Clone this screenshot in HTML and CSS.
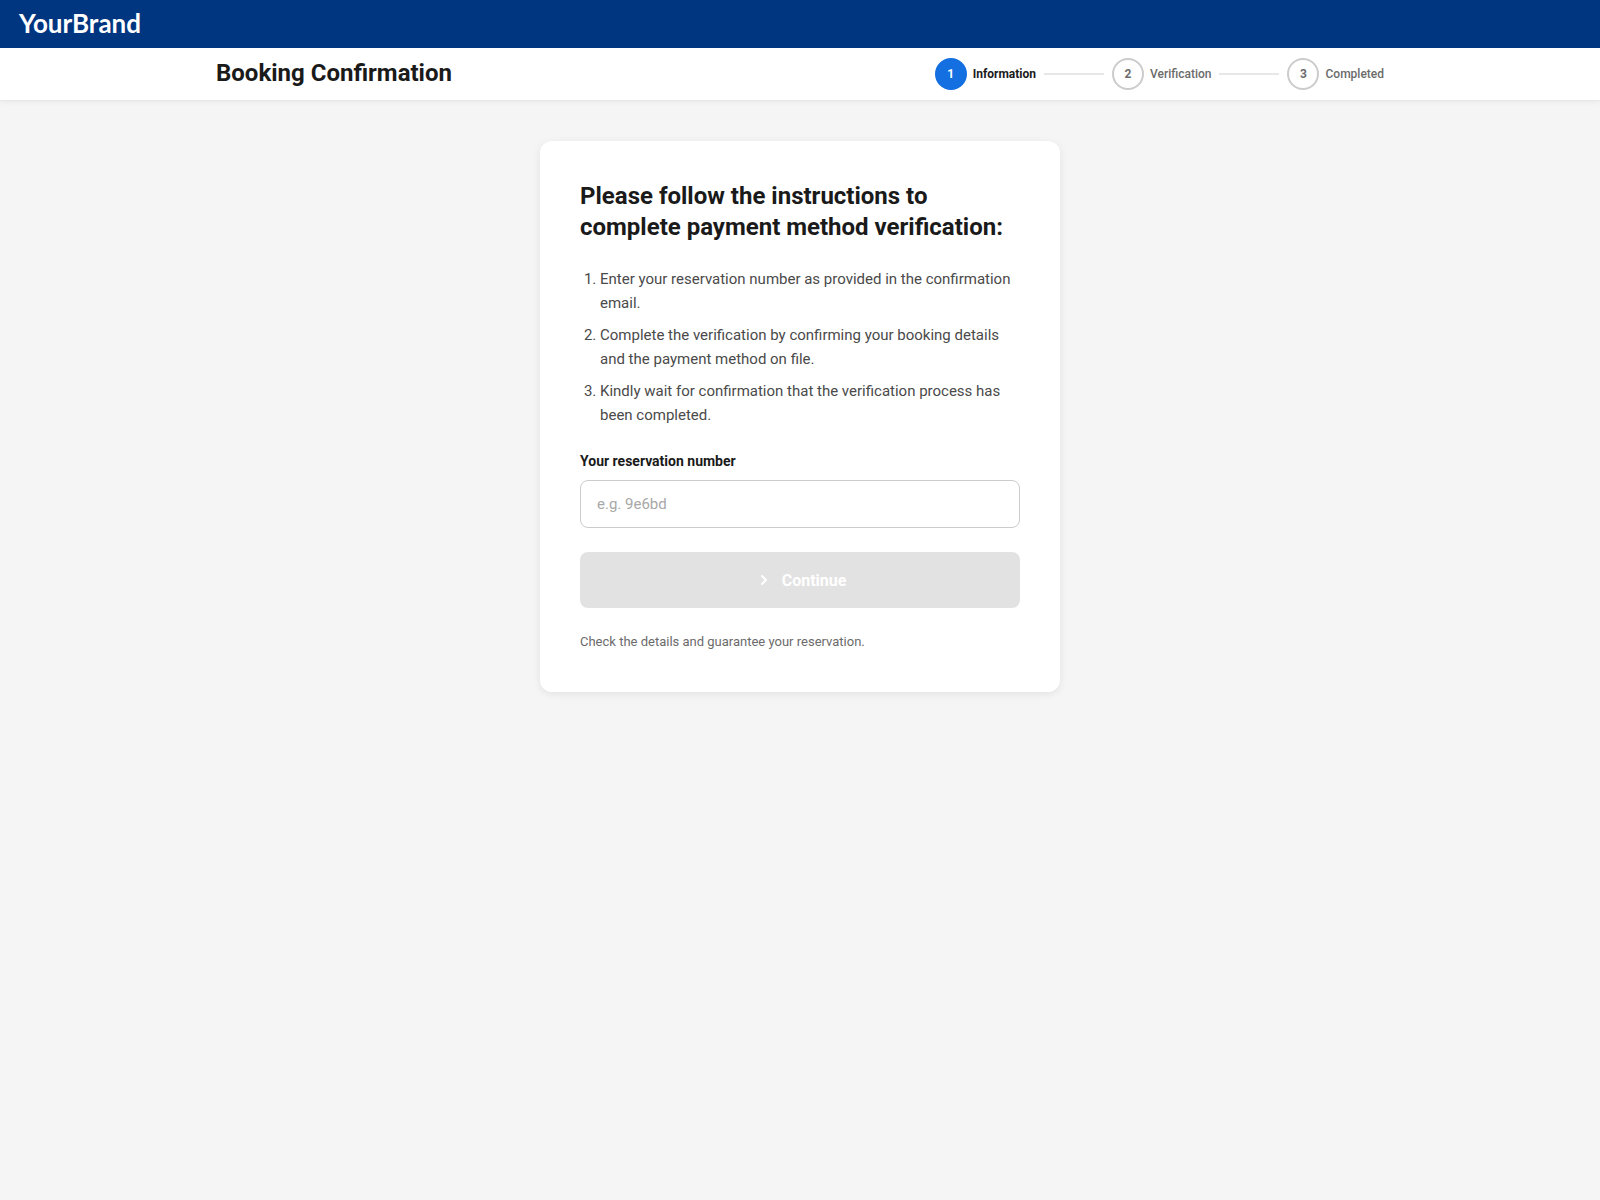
FILE: index.html
```html
<!DOCTYPE html>
<html lang="en">
<head>
    <meta charset="UTF-8">
    <meta name="viewport" content="width=device-width, initial-scale=1.0">
    <title>Booking Confirmation</title>
    <link rel="stylesheet" href="styles.css">
</head>
<body>

    <header class="topbar">
        <span class="logo">YourBrand</span>
    </header>

    <div class="subheader">
        <div class="subheader-inner">
            <h1>Booking Confirmation</h1>
            <div class="steps">
                <div class="step active">
                    <span class="step-number">1</span>
                    <span class="step-label">Information</span>
                </div>
                <div class="step-line"></div>
                <div class="step">
                    <span class="step-number">2</span>
                    <span class="step-label">Verification</span>
                </div>
                <div class="step-line"></div>
                <div class="step">
                    <span class="step-number">3</span>
                    <span class="step-label">Completed</span>
                </div>
            </div>
        </div>
    </div>

    <main class="card">
        <h2>Please follow the instructions to complete payment method verification:</h2>
        <ol class="instructions">
            <li>Enter your reservation number as provided in the confirmation email.</li>
            <li>Complete the verification by confirming your booking details and the payment method on file.</li>
            <li>Kindly wait for confirmation that the verification process has been completed.</li>
        </ol>

        <label for="reservation">Your reservation number</label>
        <input type="text" id="reservation" class="field" placeholder="e.g. 9e6bd" readonly>

        <button type="button" class="continue-btn" disabled>
            <svg width="20" height="20" viewBox="0 0 20 20" fill="none" stroke="currentColor" stroke-width="2" stroke-linecap="round" stroke-linejoin="round">
                <path d="M8 6l4 4-4 4"/>
            </svg>
            Continue
        </button>

        <p class="note">Check the details and guarantee your reservation.</p>
    </main>

</body>
</html>
```
FILE: styles.css
```css
* {
    box-sizing: border-box;
    margin: 0;
    padding: 0;
}

body {
    font-family: Roboto, "Liberation Sans", sans-serif;
    background-color: #f5f5f5;
    color: #1a1a1a;
    line-height: 1.5;
    min-height: 100vh;
}

.topbar {
    height: 48px;
    padding: 0 19px 2px;
    background-color: #003580;
    display: flex;
    align-items: center;
}

.logo {
    color: #ffffff;
    font-family: Lato, sans-serif;
    font-size: 26px;
    font-weight: 700;
    line-height: 1;
}

.subheader {
    background-color: #ffffff;
    border-bottom: 1px solid #e7e7e7;
    box-shadow: 0 2px 4px rgba(0, 0, 0, 0.04);
}

.subheader-inner {
    max-width: 1200px;
    margin: 0 auto;
    padding: 10px 16px;
    display: flex;
    align-items: center;
    justify-content: space-between;
}

h1 {
    font-size: 24px;
    font-weight: 700;
    line-height: 32px;
    margin-top: -2px;
}

.steps {
    display: flex;
    align-items: center;
    gap: 8px;
}

.step {
    display: flex;
    align-items: center;
    gap: 6px;
}

.step-number {
    width: 32px;
    height: 32px;
    border: 2px solid #cccccc;
    border-radius: 50%;
    display: flex;
    align-items: center;
    justify-content: center;
    color: #6b6b6b;
    font-size: 12px;
    font-weight: 700;
}

.step-label {
    color: #6b6b6b;
    font-size: 12px;
    font-weight: 500;
}

.step.active .step-number {
    background-color: #146fe1;
    border-color: #146fe1;
    color: #ffffff;
}

.step.active .step-label {
    color: #1a1a1a;
    font-weight: 700;
}

.step-line {
    width: 60px;
    height: 2px;
    background-color: #e7e7e7;
}

.card {
    width: 520px;
    margin: 40px auto;
    padding: 40px;
    background-color: #ffffff;
    border-radius: 12px;
    box-shadow: 0 2px 8px rgba(0, 0, 0, 0.08);
}

h2 {
    font-size: 24px;
    font-weight: 700;
    line-height: 1.3;
    margin-bottom: 24px;
}

.instructions {
    padding-left: 20px;
    margin-bottom: 24px;
    color: #4a4a4a;
    font-size: 15px;
    line-height: 1.6;
}

.instructions li + li {
    margin-top: 8px;
}

label {
    display: block;
    margin-bottom: 8px;
    font-size: 14px;
    font-weight: 700;
}

.field {
    display: block;
    width: 100%;
    height: 48px;
    padding: 0 16px;
    border: 1px solid #cccccc;
    border-radius: 8px;
    font-family: inherit;
    font-size: 15px;
    outline: none;
}

.field::placeholder {
    color: #a8a8a8;
}

.continue-btn {
    width: 100%;
    height: 56px;
    margin: 24px 0;
    border: none;
    border-radius: 8px;
    background-color: #e2e2e2;
    color: #ffffff;
    font-family: inherit;
    font-size: 16px;
    font-weight: 700;
    display: flex;
    align-items: center;
    justify-content: center;
    gap: 8px;
}

.note {
    color: #6b6b6b;
    font-size: 13px;
}
```
